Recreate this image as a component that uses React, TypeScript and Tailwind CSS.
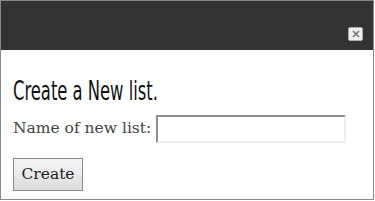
import React from "react";

export default function App() {
  return (
    <div className="w-[374px] h-[200px] border border-[#888] bg-white flex flex-col">
      <div className="h-[49px] bg-[#333] flex items-end justify-end pr-[10px] pb-[9px]">
        <button className="w-[15px] h-[14px] border border-[#aaa] bg-[#eee] rounded-[2px] flex items-center justify-center">
          <svg width="8" height="8" viewBox="0 0 8 8">
            <path d="M1 1L7 7M7 1L1 7" stroke="#777" strokeWidth="1.6" />
          </svg>
        </button>
      </div>
      <div className="px-3 pt-[29px]">
        <h2 className="origin-left scale-x-[0.7] whitespace-nowrap text-[26px] leading-[25px] text-[#111] font-stretch-condensed font-['DejaVu_Sans',sans-serif]">
          Create a New list.
        </h2>
        <div className="mt-[11px] flex items-center gap-[5px]">
          <label className="text-[15.5px] text-[#444] font-['DejaVu_Serif',serif]">Name of new list:</label>
          <input className="w-[190px] h-[28px] border-2 border-t-[#8f8f8f] border-l-[#8f8f8f] border-b-[#eee] border-r-[#eee] outline-none" />
        </div>
        <button className="mt-[15px] w-[70px] h-[33px] border border-[#888] bg-gradient-to-b from-[#f6f6f6] to-[#dcdcdc] text-[15.5px] text-[#222] font-['DejaVu_Serif',serif]">
          Create
        </button>
      </div>
    </div>
  );
}
